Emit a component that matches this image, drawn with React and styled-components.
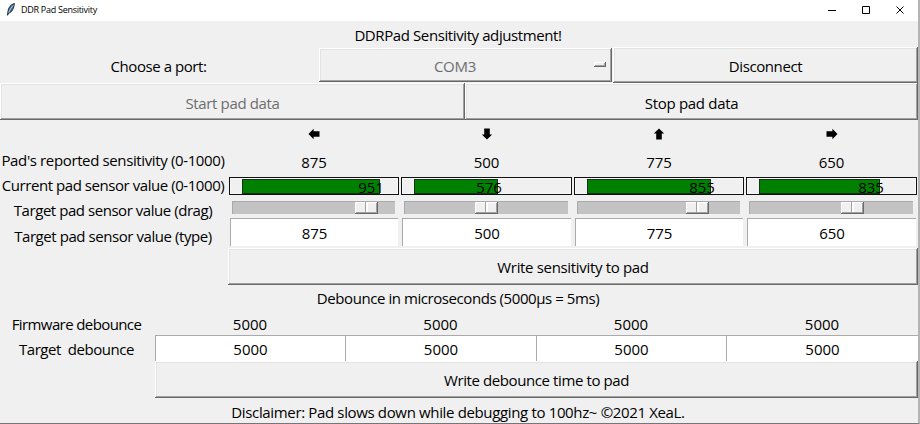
import React from "react";
import styled, { createGlobalStyle } from "styled-components";

const GlobalStyle = createGlobalStyle`
  * { box-sizing: border-box; }
  html, body { margin: 0; padding: 0; overflow: hidden; }
  body { background: #f0f0f0; }
`;

const Window = styled.div`
  width: 920px;
  height: 424px;
  display: flex;
  flex-direction: column;
  background: #f0f0f0;
  border-right: 2px solid #b4b4b4;
  border-bottom: 1px solid #77757a;
  font-family: "Open Sans", "Noto Sans", sans-serif;
  font-size: 15px;
  line-height: 20px;
  color: #000;
  overflow: hidden;
`;

const TitleBar = styled.header`
  height: 21px;
  flex: none;
  display: flex;
  align-items: center;
  background: #fff;
  padding: 0 13px 2px 6px;
`;

const AppTitle = styled.span`
  flex: 1;
  margin-left: 5px;
  font-size: 9px;
  line-height: 14px;
  letter-spacing: -0.28px;
`;

const WindowControls = styled.div`
  display: flex;
  gap: 24px;
`;

const Text = styled.span`
  white-space: pre;
  letter-spacing: ${(p) => p.$spacing || 0}px;
  transform: translateY(${(p) => p.$dy || 0}px);
`;

const Line = styled.div`
  height: ${(p) => p.$height}px;
  flex: none;
  display: flex;
  justify-content: center;
  align-items: center;
  padding-right: 2px;
`;

const PortRow = styled.div`
  height: 36px;
  flex: none;
  display: grid;
  grid-template-columns: 317px 296px 305px;
`;

const PadDataRow = styled.div`
  height: 37px;
  flex: none;
  display: grid;
  grid-template-columns: 465px 453px;
`;

const Button = styled.button`
  height: ${(p) => p.$height || 37}px;
  display: flex;
  align-items: center;
  justify-content: center;
  padding: 0;
  border: 0;
  background: #f0f0f0;
  font: inherit;
  color: ${(p) => (p.disabled ? "#6d6d6d" : "#000")};
  box-shadow: inset -1px -1px #696969, inset 1px 1px #fff,
    inset -2px -2px #a0a0a0, inset 2px 2px #e3e3e3;
`;

const PortMenu = styled(Button)`
  position: relative;
  margin: 1px 1px 0 2px;
  padding-right: 21px;
`;

const MenuIndicator = styled.span`
  position: absolute;
  right: 6px;
  top: 14px;
  width: 12px;
  height: 5px;
  box-shadow: inset -1px -1px #696969, inset 1px 1px #fff,
    inset -2px -2px #a0a0a0;
`;

const SensorSection = styled.section`
  height: 128px;
  flex: none;
  display: grid;
  grid-template-columns: 228px 172px 173px 172px 173px;
  grid-template-rows: 28px 27px 24px 24px 25px;
`;

const Cell = styled.div`
  display: flex;
  align-items: center;
  justify-content: center;
  min-width: 0;
`;

const LabelCell = styled(Cell)`
  padding-right: 2px;
`;

const GaugeCell = styled.div`
  padding: 2px 1px 4px 1px;
`;

const Gauge = styled.div`
  position: relative;
  height: 18px;
  border: 1px solid #111;
  box-shadow: inset 0 0 0 1px #f8f8f8;
  padding: 1px 0 0 12px;
`;

const GaugeFill = styled.div`
  height: 15px;
  background: #008000;
  border: 1px solid #183018;
`;

const GaugeValue = styled.span`
  position: absolute;
  top: -1px;
  transform: translateX(-50%);
`;

const SliderCell = styled.div`
  padding: 2px 5px 0 4px;
`;

const Trough = styled.div`
  display: flex;
  height: 13px;
  background: #c3c3c3;
  border-top: 1px solid #aaa;
  border-left: 1px solid #aaa;
`;

const Thumb = styled.div`
  display: flex;
  width: 23px;
  height: 12px;
  background: #f0f0f0;
  box-shadow: inset -1px -1px #696969, inset 1px 1px #fff,
    inset -2px -2px #a0a0a0;

  &::after {
    content: "";
    width: 2px;
    height: 10px;
    margin-left: 10px;
    background: #fff;
    border-left: 1px solid #a0a0a0;
  }
`;

const Entry = styled.input`
  min-width: 0;
  height: ${(p) => p.$height}px;
  margin: ${(p) => p.$margin || "0"};
  padding: 0;
  text-align: center;
  font: inherit;
  color: #000;
  background: #fff;
  border: 0;
  border-top: 1px solid #aaa;
  border-left: 1px solid #aaa;
  border-radius: 0;
  outline: 0;
`;

const ActionRow = styled.div`
  flex: none;
  display: grid;
  padding-left: ${(p) => p.$left}px;
`;

const DebounceSection = styled.section`
  height: 49px;
  flex: none;
  display: grid;
  grid-template-columns: 155px 190px 191px 190px 192px;
  grid-template-rows: 23px 26px;
`;

const ArrowSvg = styled.svg`
  transform: rotate(${(p) => p.$turn}deg);
`;

const Arrow = ({ turn }) => (
  <ArrowSvg $turn={turn} width="12" height="12" viewBox="0 0 12 12">
    <path d="M0.5 6 5.6 0.8V3.2H11.5V8.8H5.6V11.2Z" />
  </ArrowSvg>
);

const Feather = () => (
  <svg width="10" height="13" viewBox="0 0 10 13">
    <path d="M8.4 .5C5 1.3 2.2 4.4 1.9 8.8L1.5 12.3 2.7 10.2C6 9.3 8 5.2 8.4 .5Z" fill="#416c94" stroke="#172637" strokeWidth=".9" />
    <path d="M7.3 2.3C5.3 4.4 3.7 6.8 2.8 9.6" fill="none" stroke="#b7d2e5" strokeWidth="1" />
  </svg>
);

const pads = [
  { turn: 0, target: 875, current: 951, fill: 138, thumb: 122 },
  { turn: -90, target: 500, current: 576, fill: 84, thumb: 70 },
  { turn: 90, target: 775, current: 855, fill: 124, thumb: 108 },
  { turn: 180, target: 650, current: 835, fill: 121, thumb: 91 },
];

export default function App() {
  return (
    <>
      <GlobalStyle />
      <Window>
        <TitleBar>
          <Feather />
          <AppTitle>DDR Pad Sensitivity</AppTitle>
          <WindowControls>
            <svg width="10" height="10" viewBox="0 0 10 10"><path d="M1 5.5H9" stroke="#000" /></svg>
            <svg width="10" height="10" viewBox="0 0 10 10"><path d="M1.5 1.5H8.5V8.5H1.5Z" fill="none" stroke="#000" /></svg>
            <svg width="10" height="10" viewBox="0 0 10 10"><path d="M1.5 1.5 8.5 8.5M8.5 1.5 1.5 8.5" stroke="#000" /></svg>
          </WindowControls>
        </TitleBar>

        <Line $height={26}><Text $dy={1} $spacing={-0.4}>DDRPad Sensitivity adjustment!</Text></Line>

        <PortRow>
          <Cell><Text $dy={1} $spacing={-0.43}>Choose a port:</Text></Cell>
          <PortMenu disabled $height={34}>
            <Text $dy={1} $spacing={-0.25}>COM3</Text>
            <MenuIndicator />
          </PortMenu>
          <Button $height={36}><Text $dy={1} $spacing={-0.4}>Disconnect</Text></Button>
        </PortRow>

        <PadDataRow>
          <Button disabled><Text $dy={1} $spacing={-0.36}>Start pad data</Text></Button>
          <Button><Text $dy={1} $spacing={-0.3}>Stop pad data</Text></Button>
        </PadDataRow>

        <SensorSection>
          <Cell />
          {pads.map((p) => <Cell key={p.turn}><Arrow turn={p.turn} /></Cell>)}

          <LabelCell><Text $dy={-2} $spacing={-0.37}>Pad's reported sensitivity (0-1000)</Text></LabelCell>
          {pads.map((p) => <Cell key={p.turn}><Text>{p.target}</Text></Cell>)}

          <LabelCell><Text $dy={-2} $spacing={-0.44}>Current pad sensor value (0-1000)</Text></LabelCell>
          {pads.map((p) => (
            <GaugeCell key={p.turn}>
              <Gauge>
                <GaugeFill style={{ width: p.fill }} />
                <GaugeValue style={{ left: p.fill + 3 }}>{p.current}</GaugeValue>
              </Gauge>
            </GaugeCell>
          ))}

          <LabelCell><Text $dy={-1} $spacing={-0.45}>Target pad sensor value (drag)</Text></LabelCell>
          {pads.map((p) => (
            <SliderCell key={p.turn}>
              <Trough><Thumb style={{ marginLeft: p.thumb }} /></Trough>
            </SliderCell>
          ))}

          <LabelCell><Text $spacing={-0.43}>Target pad sensor value (type)</Text></LabelCell>
          {pads.map((p) => (
            <Entry key={p.turn} $height={28} $margin="-5px 2px 0 2px" defaultValue={p.target} />
          ))}
        </SensorSection>

        <ActionRow $left={228}>
          <Button><Text $spacing={-0.33}>Write sensitivity to pad</Text></Button>
        </ActionRow>

        <Line $height={27}><Text $dy={-1} $spacing={-0.43}>Debounce in microseconds (5000µs = 5ms)</Text></Line>

        <DebounceSection>
          <LabelCell><Text $spacing={-0.6}>Firmware debounce</Text></LabelCell>
          {pads.map((p) => <Cell key={p.turn}><Text>5000</Text></Cell>)}
          <LabelCell><Text $dy={1} $spacing={-0.45}>Target  debounce</Text></LabelCell>
          {pads.map((p) => <Entry key={p.turn} $height={26} defaultValue="5000" />)}
        </DebounceSection>

        <ActionRow $left={155}>
          <Button><Text $spacing={-0.4}>Write debounce time to pad</Text></Button>
        </ActionRow>

        <Line $height={25}><Text $dy={1} $spacing={-0.35}>Disclaimer: Pad slows down while debugging to 100hz~ ©2021 XeaL.</Text></Line>
      </Window>
    </>
  );
}
